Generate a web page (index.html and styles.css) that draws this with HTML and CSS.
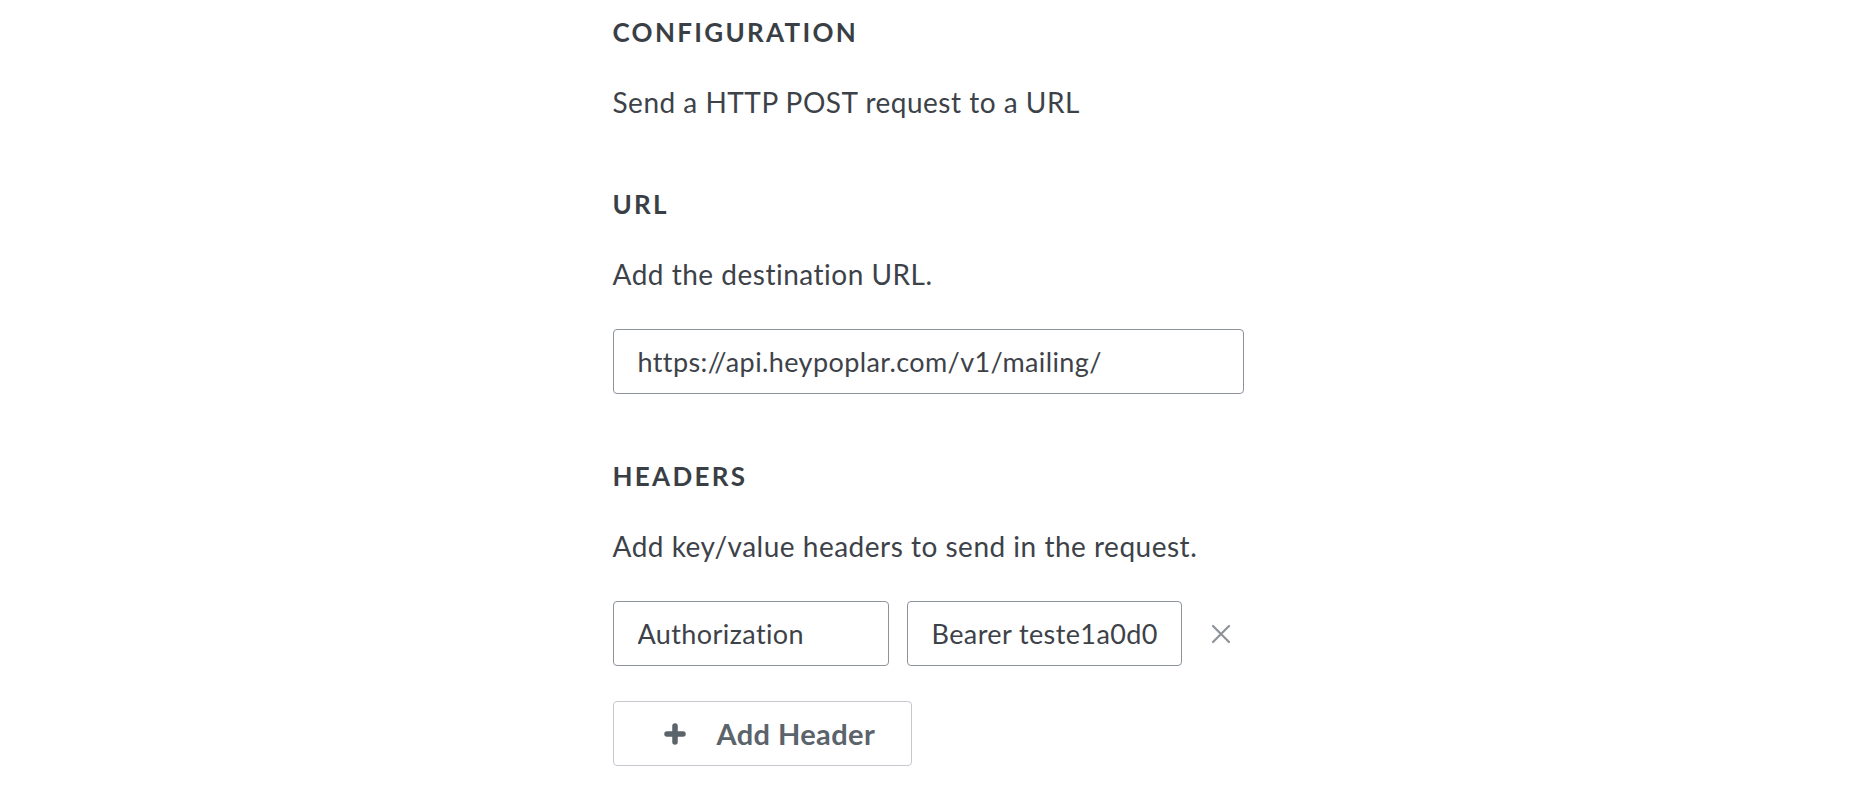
FILE: index.html
```html
<!DOCTYPE html>
<html lang="en">
<head>
<meta charset="utf-8">
<title>Configuration</title>
<link rel="stylesheet" href="styles.css">
</head>
<body>
<main class="panel">
  <section class="section section-config">
    <h2 class="title">Configuration</h2>
    <p class="desc">Send a HTTP POST request to a URL</p>
  </section>
  <section class="section section-url">
    <h2 class="title">URL</h2>
    <p class="desc">Add the destination URL.</p>
    <input class="field field-url" type="text" value="https://api.heypoplar.com/v1/mailing/">
  </section>
  <section class="section section-headers">
    <h2 class="title">Headers</h2>
    <p class="desc">Add key/value headers to send in the request.</p>
    <div class="header-row">
      <input class="field field-key" type="text" value="Authorization">
      <input class="field field-value" type="text" value="Bearer teste1a0d0c7f9b2e4a">
      <button class="remove" type="button" aria-label="Remove header">
        <svg viewBox="0 0 20 20" width="20" height="20"><path d="M2 2 L18 18 M18 2 L2 18" fill="none" stroke="currentColor" stroke-width="2.2" stroke-linecap="round"/></svg>
      </button>
    </div>
    <button class="add-btn" type="button">
      <svg class="plus" viewBox="0 0 22 22" width="22" height="22"><path d="M11 3 V19 M3 11 H19" fill="none" stroke="currentColor" stroke-width="5.5" stroke-linecap="round"/></svg>
      <span>Add Header</span>
    </button>
  </section>
</main>
</body>
</html>
```

FILE: styles.css
```css
* { box-sizing: border-box; }

html, body {
  margin: 0;
  padding: 0;
  background: #ffffff;
}

body {
  font-family: "Lato", "Liberation Sans", sans-serif;
  color: #3d4249;
}

.panel {
  width: 640px;
  margin: 0 auto;
  padding-top: 16px;
  display: flex;
  flex-direction: column;
}

.section {
  display: flex;
  flex-direction: column;
  align-items: flex-start;
}

.section-url { margin-top: 70px; }
.section-headers { margin-top: 66px; }

.title {
  margin: 0;
  font-size: 26px;
  line-height: 32px;
  font-weight: 700;
  text-transform: uppercase;
  letter-spacing: 2.3px;
  color: #3a3f46;
}

.desc {
  margin: 38px 0 0;
  font-size: 28px;
  line-height: 32px;
  font-weight: 400;
  letter-spacing: 0.5px;
  color: #3d4249;
}

.field {
  height: 65px;
  border: 1.5px solid #8e939b;
  border-radius: 4px;
  padding: 0 24px;
  font-family: inherit;
  font-size: 27px;
  letter-spacing: 0.4px;
  color: #3d4249;
  background: #ffffff;
  outline: none;
}

.field-url {
  margin-top: 39px;
  width: 631px;
}

.header-row {
  margin-top: 39px;
  display: flex;
  align-items: center;
}

.field-key { width: 276px; }
.field-value { width: 275px; margin-left: 18px; }

.remove {
  margin-left: 29px;
  padding: 0;
  border: 0;
  background: none;
  color: #8d929a;
  display: flex;
  width: 20px;
  height: 20px;
}

.add-btn {
  margin-top: 35px;
  width: 299px;
  height: 65px;
  border: 1.5px solid #c5c9cf;
  border-radius: 4px;
  background: #ffffff;
  display: flex;
  align-items: center;
  padding: 0 0 0 50px;
  gap: 31px;
  color: #5b636b;
  font-family: inherit;
  font-size: 29px;
  letter-spacing: 0.4px;
  font-weight: 700;
}

.plus { flex: none; }
```
